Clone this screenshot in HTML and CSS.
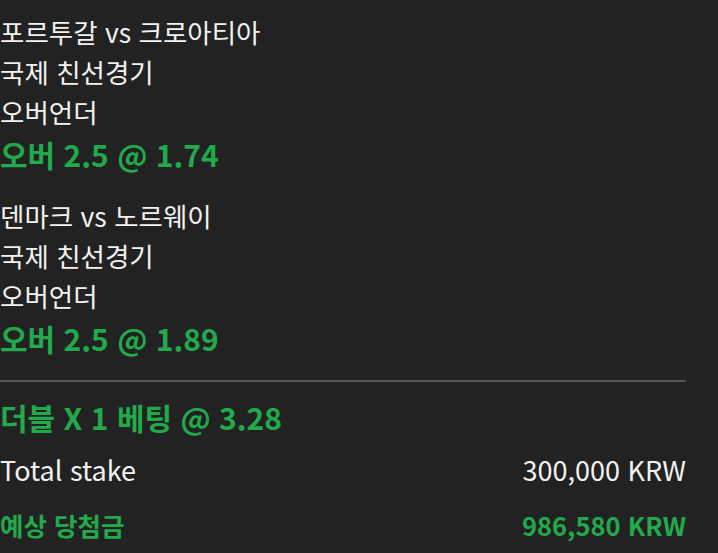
FILE: index.html
```html
<!DOCTYPE html>
<html lang="ko">
<head>
  <meta charset="UTF-8" />
  <title>Bet slip</title>
  <link rel="stylesheet" href="styles.css">
</head>
<body>
  <div class="slip">
    <!-- Selection 1 -->
    <div class="selection">
      <div class="line">포르투갈 vs 크로아티아</div>
      <div class="line">국제 친선경기</div>
      <div class="line">오버언더</div>
      <div class="pick">오버 2.5 @ 1.74</div>
    </div>

    <!-- Selection 2 -->
    <div class="selection">
      <div class="line">덴마크 vs 노르웨이</div>
      <div class="line">국제 친선경기</div>
      <div class="line">오버언더</div>
      <div class="pick">오버 2.5 @ 1.89</div>
    </div>

    <div class="summary">
      <div class="bet-type">더블 X 1 베팅 @ 3.28</div>
      <div class="row">
        <span>Total stake</span>
        <span>300,000 KRW</span>
      </div>
      <div class="row win">
        <span>예상 당첨금</span>
        <span>986,580 KRW</span>
      </div>
    </div>
  </div>
</body>
</html>
```

FILE: styles.css
```css
* {
  box-sizing: border-box;
}

body {
  margin: 0;
  background: #222222;
  color: #f2f2f2;
  font-family: "Noto Sans CJK KR", "Noto Sans", sans-serif;
}

.slip {
  width: 686px;
  padding-top: 12px;
}

.selection {
  margin-bottom: 20px;
}

.line {
  font-size: 26.5px;
  line-height: 40px;
}

.pick {
  color: #22a94b;
  font-size: 30px;
  font-weight: 700;
  line-height: 44px;
}

.summary {
  border-top: 2px solid #555555;
  padding-top: 12px;
}

.bet-type {
  color: #22a94b;
  font-size: 30px;
  font-weight: 700;
  line-height: 46px;
  margin-bottom: 2px;
}

.row {
  display: flex;
  justify-content: space-between;
  font-size: 27px;
  line-height: 55px;
}

.row.win {
  color: #22a94b;
  font-size: 25.5px;
  font-weight: 700;
}
```
